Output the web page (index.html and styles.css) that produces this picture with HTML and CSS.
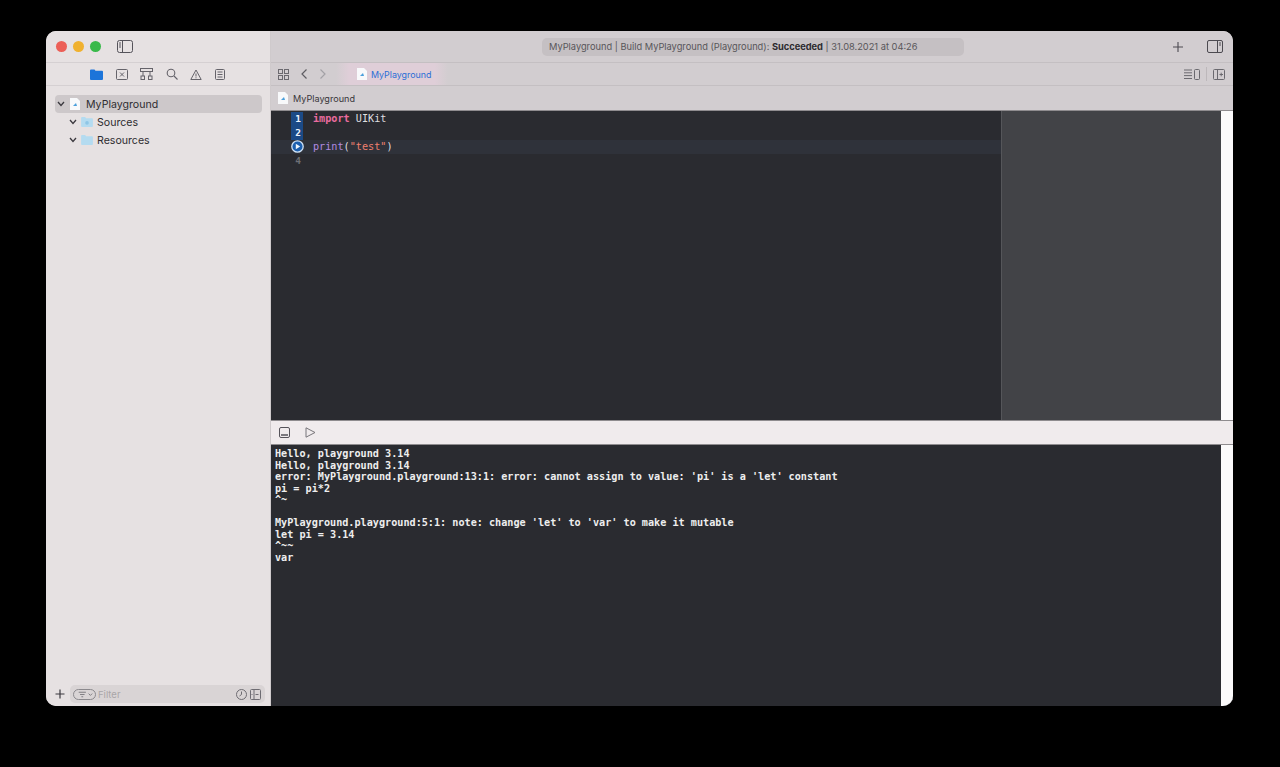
FILE: index.html
```html
<!DOCTYPE html>
<html lang="en">
<head>
<meta charset="utf-8">
<title>MyPlayground</title>
<link rel="stylesheet" href="styles.css">
</head>
<body>
<div class="window">
  <aside class="sidebar">
    <div class="side-title">
      <span class="light red"></span><span class="light yellow"></span><span class="light green"></span>
      <svg class="side-toggle" width="16" height="13" viewBox="0 0 16 13" fill="none" stroke="#55535a"><rect x=".5" y=".5" width="15" height="12" rx="2"/><path d="M5.5 .5v12M2 3h2M2 5h2M2 7h2"/></svg>
    </div>
    <div class="nav-tabs">
      <svg width="13" height="11" viewBox="0 0 13 11"><path fill="#1c74d9" d="M0 1.5A1 1 0 0 1 1 .5h3.5l1 1.2H12a1 1 0 0 1 1 1V10a1 1 0 0 1-1 1H1a1 1 0 0 1-1-1z"/></svg>
      <svg width="12" height="11" viewBox="0 0 12 11" fill="none" stroke="#65636a"><rect x=".5" y=".5" width="11" height="10" rx="1"/><path d="M4 3.5l4 4M8 3.5l-4 4"/></svg>
      <svg width="13" height="12" viewBox="0 0 13 12" fill="none" stroke="#65636a"><rect x=".5" y=".5" width="12" height="3"/><path d="M3 3.5V8M10 3.5V8"/><rect x="1" y="8" width="3.5" height="3.5"/><rect x="8.5" y="8" width="3.5" height="3.5"/></svg>
      <svg width="12" height="12" viewBox="0 0 12 12" fill="none" stroke="#65636a" stroke-width="1.1"><circle cx="5" cy="5" r="3.8"/><path d="M8 8l3.5 3.5"/></svg>
      <svg width="12" height="11" viewBox="0 0 12 11" fill="none" stroke="#65636a"><path d="M6 1L.8 10.5h10.4z"/><path d="M6 4.5v3M6 8.3v1"/></svg>
      <svg width="10" height="11" viewBox="0 0 10 11" fill="none" stroke="#65636a"><rect x=".5" y=".5" width="9" height="10" rx="1"/><path d="M2.5 3h5M2.5 5.5h5M2.5 8h5"/></svg>
    </div>
    <ul class="tree">
      <li class="row selected">
        <svg class="chev" width="8" height="6" viewBox="0 0 8 6" fill="none" stroke="#3c3a40" stroke-width="1.3"><path d="M1 1l3 3.5L7 1"/></svg>
        <svg class="doc" width="10" height="12" viewBox="0 0 10 12"><path fill="#f8f9fb" d="M0 0h7l3 3v9H0z"/><path fill="#4a9fdc" d="M3 8l3-3 1 3z"/></svg>
        <span class="name-main">MyPlayground</span>
      </li>
      <li class="row child">
        <svg class="chev" width="8" height="6" viewBox="0 0 8 6" fill="none" stroke="#3c3a40" stroke-width="1.3"><path d="M1 1l3 3.5L7 1"/></svg>
        <svg class="folder" width="12" height="10" viewBox="0 0 13 11"><path fill="#b4dbf0" d="M0 1a1 1 0 0 1 1-1h3.5l1 1.3H12a1 1 0 0 1 1 1V10a1 1 0 0 1-1 1H1a1 1 0 0 1-1-1z"/><circle cx="6.5" cy="6.5" r="2" fill="#8fc6e6"/></svg>
        <span>Sources</span>
      </li>
      <li class="row child">
        <svg class="chev" width="8" height="6" viewBox="0 0 8 6" fill="none" stroke="#3c3a40" stroke-width="1.3"><path d="M1 1l3 3.5L7 1"/></svg>
        <svg class="folder" width="12" height="10" viewBox="0 0 13 11"><path fill="#b4dbf0" d="M0 1a1 1 0 0 1 1-1h3.5l1 1.3H12a1 1 0 0 1 1 1V10a1 1 0 0 1-1 1H1a1 1 0 0 1-1-1z"/></svg>
        <span>Resources</span>
      </li>
    </ul>
    <div class="filter-bar">
      <svg width="10" height="10" viewBox="0 0 10 10" stroke="#3a383e" stroke-width="1.2"><path d="M5 .5v9M.5 5h9"/></svg>
      <div class="filter">
        <span class="filter-pill">
          <svg width="18" height="9" viewBox="0 0 20 10" fill="none" stroke="#77757a"><path d="M3 2.5h8M4.5 5h5M6 7.5h2M14 4l2 2 2-2"/></svg>
        </span>
        <span class="filter-text">Filter</span>
        <svg class="filter-clock" width="11" height="11" viewBox="0 0 11 11" fill="none" stroke="#6e6c72"><circle cx="5.500" cy="5.500" r="5"/><path d="M5.500 2.500v3l-2 1.500"/></svg>
        <svg width="11" height="11" viewBox="0 0 11 11" fill="none" stroke="#6e6c72"><rect x=".5" y=".5" width="10" height="10" rx="1"/><path d="M4 1v9M5.500 5.500h3M1.500 5.500h1"/></svg>
      </div>
    </div>
  </aside>
  <main class="main">
    <header class="titlebar">
      <div class="status">MyPlayground | Build MyPlayground (Playground): <b>Succeeded</b> | 31.08.2021 at 04:26</div>
      <svg class="plus" width="10" height="10" viewBox="0 0 10 10" stroke="#4c4a50" stroke-width="1.1"><path d="M5 0v10M0 5h10"/></svg>
      <svg class="right-toggle" width="16" height="13" viewBox="0 0 16 13" fill="none" stroke="#4c4a50"><rect x=".5" y=".5" width="15" height="12" rx="1.500"/><path d="M10.500 .5v12"/><path d="M12 3h2M12 5h2"/></svg>
    </header>
    <nav class="tabbar">
      <svg class="grid-icon" width="11" height="11" viewBox="0 0 11 11" fill="none" stroke="#6b696f"><rect x=".5" y=".5" width="4" height="4"/><rect x="6.500" y=".5" width="4" height="4"/><rect x=".5" y="6.500" width="4" height="4"/><rect x="6.500" y="6.500" width="4" height="4"/></svg>
      <svg class="back" width="6" height="10" viewBox="0 0 6 10" fill="none" stroke="#5f5d63" stroke-width="1.2"><path d="M5.500 .5L1 5l4.500 4.500"/></svg>
      <svg class="forward" width="6" height="10" viewBox="0 0 6 10" fill="none" stroke="#a3a1a6" stroke-width="1.2"><path d="M.5 .5L5 5 .5 9.500"/></svg>
      <div class="tab">
        <svg width="10" height="12" viewBox="0 0 10 12"><path fill="#f8f9fb" d="M0 0h7l3 3v9H0z"/><path fill="#4a9fdc" d="M3 8l3-3 1 3z"/></svg>
        <span>MyPlayground</span>
      </div>
      <div class="tab-tools">
        <svg width="16" height="11" viewBox="0 0 16 11" fill="none" stroke="#6b696f"><path d="M0 1h8M0 3.800h8M0 6.600h8M0 9.500h8"/><rect x="10.500" y=".5" width="5" height="10" rx="1"/></svg>
        <span class="tool-sep"></span>
        <svg width="12" height="11" viewBox="0 0 12 11" fill="none" stroke="#6b696f"><rect x=".5" y=".5" width="11" height="10" rx="1"/><path d="M4.500 .5v10M6.500 5.500h3.500M8.200 3.700v3.600"/></svg>
      </div>
    </nav>
    <div class="crumbs">
      <svg width="10" height="12" viewBox="0 0 10 12"><path fill="#f8f9fb" d="M0 0h7l3 3v9H0z"/><path fill="#4a9fdc" d="M3 8l3-3 1 3z"/></svg>
      <span>MyPlayground</span>
    </div>
    <section class="editor">
      <div class="code-pane">
        <div class="line"><span class="ln sel">1</span><code><span class="kw">import</span> UIKit</code></div>
        <div class="line"><span class="ln sel">2</span><code></code></div>
        <div class="line current"><span class="ln run"><svg width="13" height="13" viewBox="0 0 13 13"><circle cx="6.500" cy="6.500" r="5.700" fill="#1c5fae" stroke="#cfe2f6" stroke-width="1.300"/><path d="M4.800 3.800l4.400 2.700-4.400 2.700z" fill="#f0f6fc"/></svg></span><code><span class="fn">print</span>(<span class="str">"test"</span>)</code></div>
        <div class="line"><span class="ln">4</span><code></code></div>
      </div>
      <div class="results"></div>
      <div class="strip"></div>
    </section>
    <div class="debug-bar">
      <svg width="11" height="11" viewBox="0 0 11 11" fill="none" stroke="#55535a"><rect x=".5" y=".5" width="10" height="10" rx="1.500"/><path d="M2 8h7" stroke-width="1.500"/></svg>
      <svg width="11" height="11" viewBox="0 0 11 11" fill="none" stroke="#77757a"><path d="M1 .8l9 4.700-9 4.700z"/></svg>
    </div>
    <section class="console-wrap">
      <pre class="console">Hello, playground 3.14
Hello, playground 3.14
error: MyPlayground.playground:13:1: error: cannot assign to value: 'pi' is a 'let' constant
pi = pi*2
^~

MyPlayground.playground:5:1: note: change 'let' to 'var' to make it mutable
let pi = 3.14
^~~
var</pre>
      <div class="strip"></div>
    </section>
  </main>
</div>
</body>
</html>
```
FILE: styles.css
```css
* { box-sizing: border-box; }
html, body { height: 100%; }
body {
  margin: 0;
  background: #000;
  padding: 31px 47px 61px 46px;
  font-family: "Inter", "Liberation Sans", sans-serif;
  overflow: hidden;
}
svg { display: block; flex: none; }
.window {
  display: flex;
  height: 675px;
  border-radius: 10px;
  overflow: hidden;
  background: #e6e1e2;
}

/* Sidebar */
.sidebar {
  width: 225px;
  flex: none;
  display: flex;
  flex-direction: column;
  background: #e6e1e2;
  border-right: 1px solid #cfcacc;
}
.side-title {
  height: 32px;
  flex: none;
  display: flex;
  align-items: center;
  padding-left: 10px;
  gap: 6px;
  border-bottom: 1px solid #d5d0d2;
}
.light { width: 11px; height: 11px; border-radius: 50%; }
.red { background: #ec5f57; }
.yellow { background: #f0b12f; }
.green { background: #39b94a; }
.side-toggle { margin-left: 10px; }
.nav-tabs {
  height: 23px;
  flex: none;
  display: flex;
  align-items: center;
  padding-left: 44px;
  gap: 12.6px;
  border-bottom: 1px solid #d5d0d2;
}
.tree {
  list-style: none;
  margin: 9px 0 0;
  padding: 0 8px 0 9px;
  flex: 1;
  font-size: 10.6px;
  color: #2f2d31;
}
.row {
  height: 18px;
  display: flex;
  align-items: center;
  gap: 4px;
}
.selected {
  background: #cdc8ca;
  border-radius: 4px;
  padding-left: 2px;
  gap: 5px;
}
.name-main { margin-left: 1px; }
.child { padding-left: 14px; }
.filter-bar {
  height: 24px;
  flex: none;
  display: flex;
  align-items: center;
  padding: 0 5px 0 9px;
  gap: 5px;
}
.filter {
  flex: 1;
  height: 18px;
  background: #d9d4d5;
  border-radius: 5px;
  display: flex;
  align-items: center;
  padding: 0 4px 0 3px;
  gap: 3px;
}
.filter-pill {
  width: 23px;
  height: 11px;
  border: 1px solid #8b898d;
  border-radius: 6px;
  display: flex;
  align-items: center;
  justify-content: center;
}
.filter-text {
  flex: 1;
  font-size: 9.5px;
  color: #a9a6a8;
  margin-left: -1px;
}

/* Main column */
.main {
  flex: 1;
  min-width: 0;
  display: flex;
  flex-direction: column;
  background: #d2cdd0;
}
.titlebar {
  height: 32px;
  flex: none;
  display: flex;
  align-items: center;
  padding-left: 271px;
  padding-right: 10px;
  border-bottom: 1px solid #c4bfc2;
}
.status {
  width: 422px;
  height: 18px;
  background: #c5c0c3;
  border-radius: 5px;
  font-size: 9.28px;
  line-height: 18px;
  padding-left: 7px;
  color: #58565a;
  white-space: nowrap;
}
.status b { color: #2d2b2f; font-weight: 700; }
.plus { margin-left: auto; }
.right-toggle { margin-left: 24px; }
.tabbar {
  height: 23px;
  flex: none;
  display: flex;
  align-items: center;
  padding-left: 7px;
  padding-right: 8px;
  border-bottom: 1px solid #c4bfc2;
}
.back { margin-left: 12px; }
.forward { margin-left: 13px; }
.tab {
  width: 112px;
  height: 22px;
  margin-left: 10px;
  background: linear-gradient(90deg, #d2cdd0, #dfced8 12%, #dfced8 88%, #d2cdd0);
  display: flex;
  align-items: center;
  gap: 4px;
  padding-left: 21px;
  font-size: 8.9px;
  color: #2b6fd6;
}
.tab span { white-space: nowrap; }
.tab-tools {
  margin-left: auto;
  display: flex;
  align-items: center;
  gap: 6px;
}
.tool-sep { width: 1px; height: 14px; background: #bdb8bb; }
.crumbs {
  height: 25px;
  flex: none;
  display: flex;
  align-items: center;
  gap: 5px;
  padding-left: 7px;
  font-size: 9.1px;
  color: #38363a;
  border-bottom: 1px solid #8f8c8f;
}

/* Editor */
.editor {
  height: 310px;
  flex: none;
  display: flex;
  background: #2a2b30;
  border-bottom: 1px solid #8f8c8f;
}
.code-pane {
  width: 730px;
  flex: none;
  padding-top: 1px;
  font: 10.17px/14px "DejaVu Sans Mono", monospace;
  color: #dfdfe0;
}
.line {
  height: 14px;
  display: flex;
  align-items: center;
}
.line code { font: inherit; padding-left: 10px; white-space: pre; }
.ln {
  width: 32px;
  padding-right: 2px;
  flex: none;
  height: 14px;
  text-align: right;
  color: #6f7075;
  font-size: 9.5px;
  font-weight: 700;
  position: relative;
}
.ln.sel {
  color: #eef3fa;
  background: linear-gradient(#1b4a86, #1b4a86) 20px 0 / 12px 100% no-repeat;
}
.ln.run svg { position: absolute; left: 20px; top: 0; }
.current { background: #2f323a; }
.kw { color: #ea6c9f; font-weight: 700; }
.fn { color: #b18be0; }
.str { color: #f0806f; }
.results {
  flex: 1;
  background: #424347;
  border-left: 1px solid #55565a;
}
.strip {
  width: 12px;
  flex: none;
  background: #fbfafb;
}
.debug-bar {
  height: 24px;
  flex: none;
  display: flex;
  align-items: center;
  padding-left: 8px;
  gap: 15px;
  background: #f0ebed;
  border-bottom: 1px solid #8f8c8f;
}

/* Console */
.console-wrap {
  flex: 1;
  min-height: 0;
  display: flex;
  background: #2a2b30;
}
.console {
  flex: 1;
  margin: 0;
  padding: 3px 0 0 4px;
  font: 700 10.17px/11.5px "DejaVu Sans Mono", monospace;
  color: #eeeeee;
  white-space: pre;
}
```
